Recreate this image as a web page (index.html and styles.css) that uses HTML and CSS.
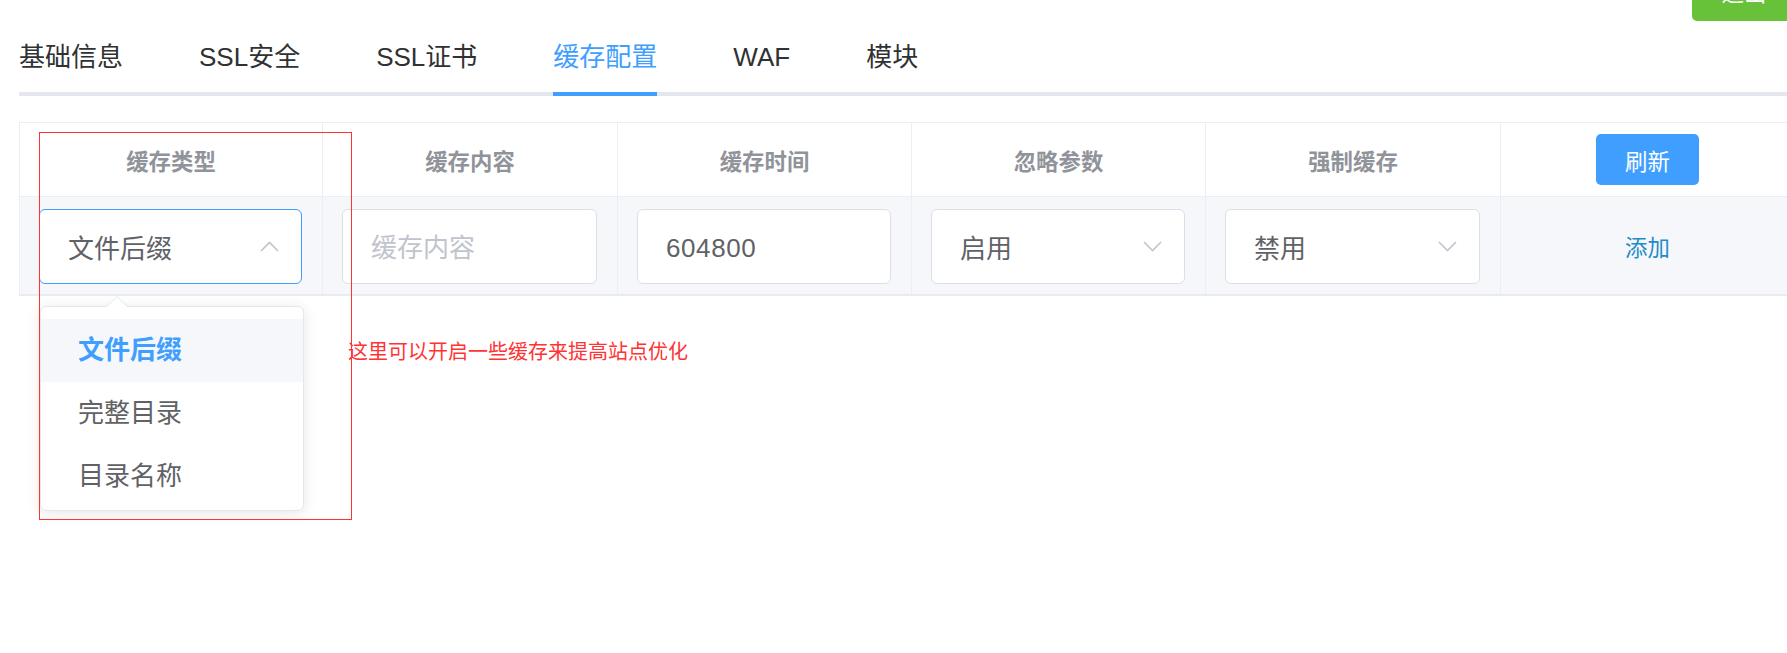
FILE: index.html
```html
<!DOCTYPE html>
<html lang="zh-CN">
<head>
    <meta charset="UTF-8">
    <title>缓存配置</title>
    <link rel="stylesheet" href="styles.css">
</head>
<body>
    <div class="page">
        <div class="top-bar">
            <button class="logout-button">退出</button>
        </div>

        <div class="tabs">
            <div class="tab-item">基础信息</div>
            <div class="tab-item">SSL安全</div>
            <div class="tab-item">SSL证书</div>
            <div class="tab-item active">缓存配置</div>
            <div class="tab-item">WAF</div>
            <div class="tab-item">模块</div>
        </div>

        <div class="cache-panel">
            <div class="cache-table">
                <div class="head-cell">缓存类型</div>
                <div class="head-cell">缓存内容</div>
                <div class="head-cell">缓存时间</div>
                <div class="head-cell">忽略参数</div>
                <div class="head-cell">强制缓存</div>
                <div class="head-cell"><button class="refresh-button">刷新</button></div>

                <div class="body-cell">
                    <div class="select is-open">
                        <span>文件后缀</span>
                        <svg class="arrow" width="19" height="11" viewBox="0 0 19 11"><polyline points="1,10 9.5,1.5 18,10"/></svg>

                        <!-- 下拉选项 -->
                        <div class="dropdown">
                            <div class="dropdown-item selected">文件后缀</div>
                            <div class="dropdown-item">完整目录</div>
                            <div class="dropdown-item">目录名称</div>
                        </div>
                    </div>
                </div>
                <div class="body-cell">
                    <input class="field" type="text" placeholder="缓存内容">
                </div>
                <div class="body-cell">
                    <input class="field" type="text" value="604800">
                </div>
                <div class="body-cell">
                    <div class="select">
                        <span>启用</span>
                        <svg class="arrow" width="19" height="11" viewBox="0 0 19 11"><polyline points="1,1 9.5,9.5 18,1"/></svg>
                    </div>
                </div>
                <div class="body-cell">
                    <div class="select">
                        <span>禁用</span>
                        <svg class="arrow" width="19" height="11" viewBox="0 0 19 11"><polyline points="1,1 9.5,9.5 18,1"/></svg>
                    </div>
                </div>
                <div class="body-cell center">
                    <span class="add-link">添加</span>
                </div>
            </div>

            <p class="note">这里可以开启一些缓存来提高站点优化</p>

            <!-- 标注框 -->
            <div class="mark-box"></div>
        </div>
    </div>
</body>
</html>
```

FILE: styles.css
```css
* {
    margin: 0;
    padding: 0;
    box-sizing: border-box;
}

html,
body {
    height: 100%;
}

body {
    font-family: "Liberation Sans", "Noto Sans CJK SC", sans-serif;
    background: #fff;
    color: #303133;
    overflow: hidden;
}

.page {
    width: 1796px;
    min-height: 700px;
    margin-top: -31px;
    padding-left: 19px;
}

/* 顶部按钮 */
.top-bar {
    height: 52px;
    display: flex;
    justify-content: flex-end;
}

.logout-button {
    width: 104px;
    height: 52px;
    padding-bottom: 8px;
    border: none;
    border-radius: 5px;
    background: #67c23a;
    color: #fff;
    font: inherit;
    font-size: 22.4px;
}

/* 标签页 */
.tabs {
    display: flex;
    gap: 76px;
    height: 75px;
    background: linear-gradient(#e4e7ed, #e4e7ed) left bottom / 100% 4px no-repeat;
}

.tab-item {
    box-sizing: content-box;
    height: 69px;
    line-height: 69px;
    padding-top: 2px;
    border-bottom: 4px solid transparent;
    font-size: 26px;
    color: #303133;
    white-space: nowrap;
}

.tab-item.active {
    color: #409eff;
    border-bottom-color: #409eff;
}

/* 表格 */
.cache-panel {
    position: relative;
    margin-top: 26px;
}

.cache-table {
    display: grid;
    grid-template-columns: 303px 295px 294px 294px 295px 294px;
    border-top: 1px solid #ebeef5;
    border-left: 1px solid #ebeef5;
}

.head-cell {
    height: 74px;
    display: flex;
    align-items: center;
    justify-content: center;
    border-right: 1px solid #ebeef5;
    border-bottom: 1px solid #ebeef5;
    font-size: 22.4px;
    font-weight: bold;
    color: #909399;
}

.body-cell {
    height: 99px;
    display: flex;
    align-items: center;
    padding: 2px 20px 0 19px;
    background: #f5f7fa;
    border-right: 1px solid #ebeef5;
    border-bottom: 2px solid #e9ebf0;
}

.body-cell.center {
    justify-content: center;
    padding: 0;
}

.refresh-button {
    width: 103px;
    height: 51px;
    border: none;
    border-radius: 5px;
    background: #409eff;
    color: #fff;
    font: inherit;
    font-size: 22.4px;
    font-weight: normal;
}

.select,
.field {
    position: relative;
    width: 100%;
    height: 75px;
    border: 1px solid #dcdfe6;
    border-radius: 6px;
    background: #fff;
    color: #606266;
    font: inherit;
    font-size: 26px;
}

.select {
    display: flex;
    align-items: center;
    justify-content: space-between;
    padding: 0 22px 0 28px;
}

.select.is-open {
    border-color: #409eff;
}

.field {
    padding: 4px 28px 0;
    outline: none;
    letter-spacing: 0.6px;
}

.field::placeholder {
    color: #c0c4cc;
    letter-spacing: 0;
}

.arrow {
    fill: none;
    stroke: #c0c4cc;
    stroke-width: 1.6;
}

.add-link {
    font-size: 22.4px;
    color: #1f8cc6;
}

/* 下拉框 */
.dropdown {
    position: absolute;
    top: calc(100% + 23px);
    left: 0;
    width: 264px;
    padding: 12px 0 2px;
    background: #fff;
    border: 1px solid #e4e7ed;
    border-radius: 6px;
    box-shadow: 0 2px 14px rgba(0, 0, 0, 0.1);
    z-index: 2;
}

.dropdown::before,
.dropdown::after {
    content: '';
    position: absolute;
    left: 66px;
    border: 10px solid transparent;
    border-top: none;
}

.dropdown::before {
    top: -11px;
    border-bottom: 10px solid #e4e7ed;
}

.dropdown::after {
    top: -10px;
    border-bottom: 10px solid #fff;
}

.dropdown-item {
    height: 63px;
    line-height: 63px;
    padding-left: 37px;
    font-size: 26px;
    color: #606266;
}

.dropdown-item.selected {
    background: #f5f7fa;
    color: #409eff;
    font-weight: bold;
}

.note {
    margin: 44px 0 0 329px;
    font-size: 20px;
    line-height: 24px;
    color: #f33;
}

.mark-box {
    position: absolute;
    left: 20px;
    top: 10px;
    width: 313px;
    height: 388px;
    border: 1px solid #f33;
    pointer-events: none;
    z-index: 3;
}
```
